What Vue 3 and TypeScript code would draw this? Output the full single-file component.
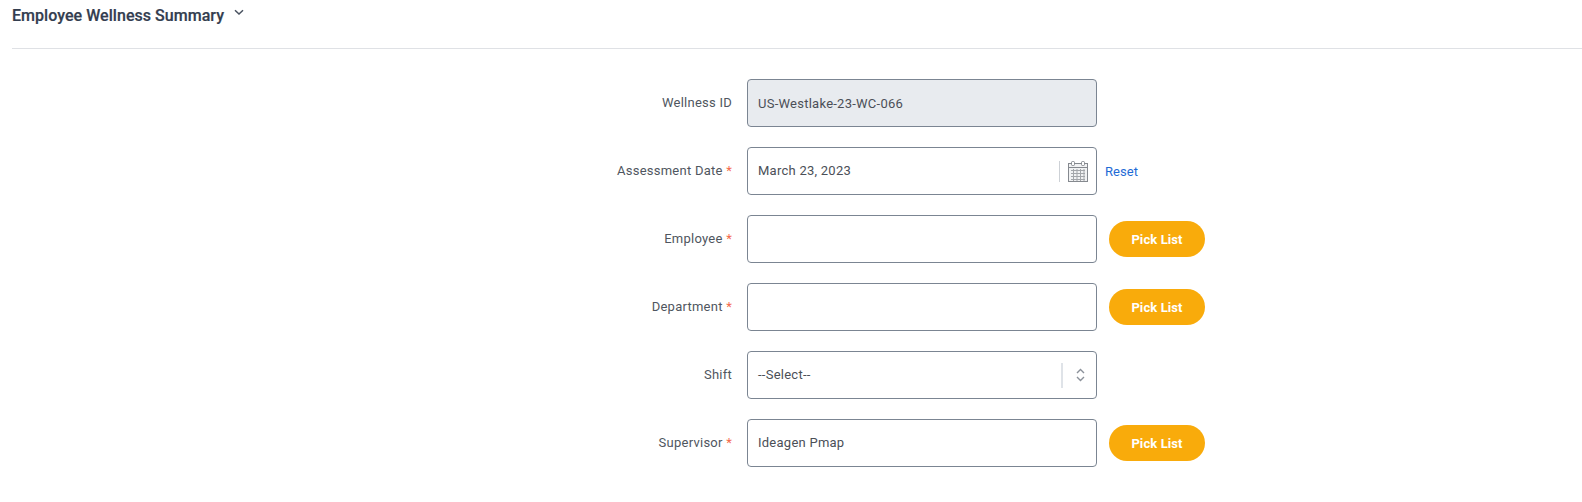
<script setup lang="ts">
interface Row {
  label: string;
  required: boolean;
  value: string;
  kind: 'readonly' | 'date' | 'text' | 'select';
  pick: boolean;
}
const rows: Row[] = [
  { label: 'Wellness ID', required: false, value: 'US-Westlake-23-WC-066', kind: 'readonly', pick: false },
  { label: 'Assessment Date', required: true, value: 'March 23, 2023', kind: 'date', pick: false },
  { label: 'Employee', required: true, value: '', kind: 'text', pick: true },
  { label: 'Department', required: true, value: '', kind: 'text', pick: true },
  { label: 'Shift', required: false, value: '--Select--', kind: 'select', pick: false },
  { label: 'Supervisor', required: true, value: 'Ideagen Pmap', kind: 'text', pick: true },
];
</script>

<template>
  <div class="page">
    <header class="head">
      <h2 class="title">Employee Wellness Summary</h2>
      <svg class="chev" width="10" height="7" viewBox="0 0 10 7" fill="none">
        <path d="M1 1.2 5 5l4-3.8" stroke="#4a5361" stroke-width="1.5" />
      </svg>
    </header>
    <form class="form" @submit.prevent>
      <div v-for="r in rows" :key="r.label" class="row">
        <label class="label">{{ r.label }}<span v-if="r.required" class="req"> *</span></label>
        <div class="field" :class="{ ro: r.kind === 'readonly' }">
          <span class="val">{{ r.value }}</span>
          <template v-if="r.kind === 'date'">
            <span class="sep date-sep"></span>
            <svg class="cal" width="20" height="21" viewBox="0 0 20 21" fill="none">
              <rect x="0.5" y="2.5" width="19" height="18" fill="#f1f2f3" stroke="#85898f" />
              <path d="M1 6.5h18" stroke="#85898f" />
              <path d="M3 9.5h14M3 12.5h14M3 15.5h14M3 18.5h14M5.5 8v12M9 8v12M12.5 8v12M16 8v12" stroke="#a3a6aa" />
              <rect x="3.5" y="0.5" width="3" height="4" rx="1" fill="#fff" stroke="#85898f" />
              <rect x="13.5" y="0.5" width="3" height="4" rx="1" fill="#fff" stroke="#85898f" />
            </svg>
          </template>
          <template v-if="r.kind === 'select'">
            <span class="sep select-sep"></span>
            <svg class="updown" width="9" height="14" viewBox="0 0 9 14" fill="none">
              <path d="M1 5 4.5 1.5 8 5M1 9l3.5 3.5L8 9" stroke="#8b919a" stroke-width="1.4" />
            </svg>
          </template>
        </div>
        <a v-if="r.kind === 'date'" class="reset">Reset</a>
        <button v-if="r.pick" type="button" class="pick">Pick List</button>
      </div>
    </form>
  </div>
</template>

<style>
html, body { margin: 0; background: #fff; }
</style>

<style scoped>
.page {
  width: 1582px;
  height: 502px;
  overflow: hidden;
  font-family: Roboto, "Liberation Sans", sans-serif;
  font-size: 13px;
  box-sizing: border-box;
  padding-left: 12px;
}
.head {
  height: 48px;
  border-bottom: 1px solid #dfe1e5;
  display: flex;
  align-items: flex-start;
  gap: 10px;
}
.title {
  margin: 6px 0 0;
  font-size: 16px;
  line-height: 20px;
  font-weight: 500;
  color: #333d4f;
  letter-spacing: 0.04px;
  -webkit-text-stroke: 0.2px #333d4f;
}
.chev { margin-top: 9px; }
.form {
  display: flex;
  flex-direction: column;
  gap: 20px;
  padding-top: 30px;
}
.row {
  display: flex;
  align-items: center;
  height: 48px;
}
.label {
  width: 735px;
  padding-right: 15px;
  padding-bottom: 2px;
  box-sizing: border-box;
  text-align: right;
  color: #4f5660;
  letter-spacing: 0.25px;
}
.req { color: #f4694c; }
.field {
  width: 350px;
  height: 48px;
  box-sizing: border-box;
  border: 1px solid #7b8592;
  border-radius: 4px;
  background: #fff;
  display: flex;
  align-items: center;
  padding-left: 10px;
}
.ro { background: #e8ebef; }
.val {
  flex: 1;
  color: #4b4f57;
  letter-spacing: 0.25px;
  padding-bottom: 2px;
}
.ro .val { padding-bottom: 0; }
.sep {
  width: 1px;
  background: #cdd1d6;
  height: 21px;
}
.date-sep { margin-right: 8px; }
.cal { margin-right: 8px; }
.select-sep {
  width: 2px;
  height: 25px;
  background: #dfe3e8;
  margin-right: 13px;
}
.updown { margin-right: 11px; }
.reset {
  margin-left: 8px;
  color: #1f6bd6;
  letter-spacing: 0.05px;
  cursor: pointer;
}
.pick {
  margin-left: 12px;
  width: 96px;
  height: 36px;
  border: 0;
  border-radius: 18px;
  background: #f9ab0b;
  color: #fff;
  font: 700 13px Roboto, "Liberation Sans", sans-serif;
  letter-spacing: 0.1px;
  padding: 0;
}
</style>
